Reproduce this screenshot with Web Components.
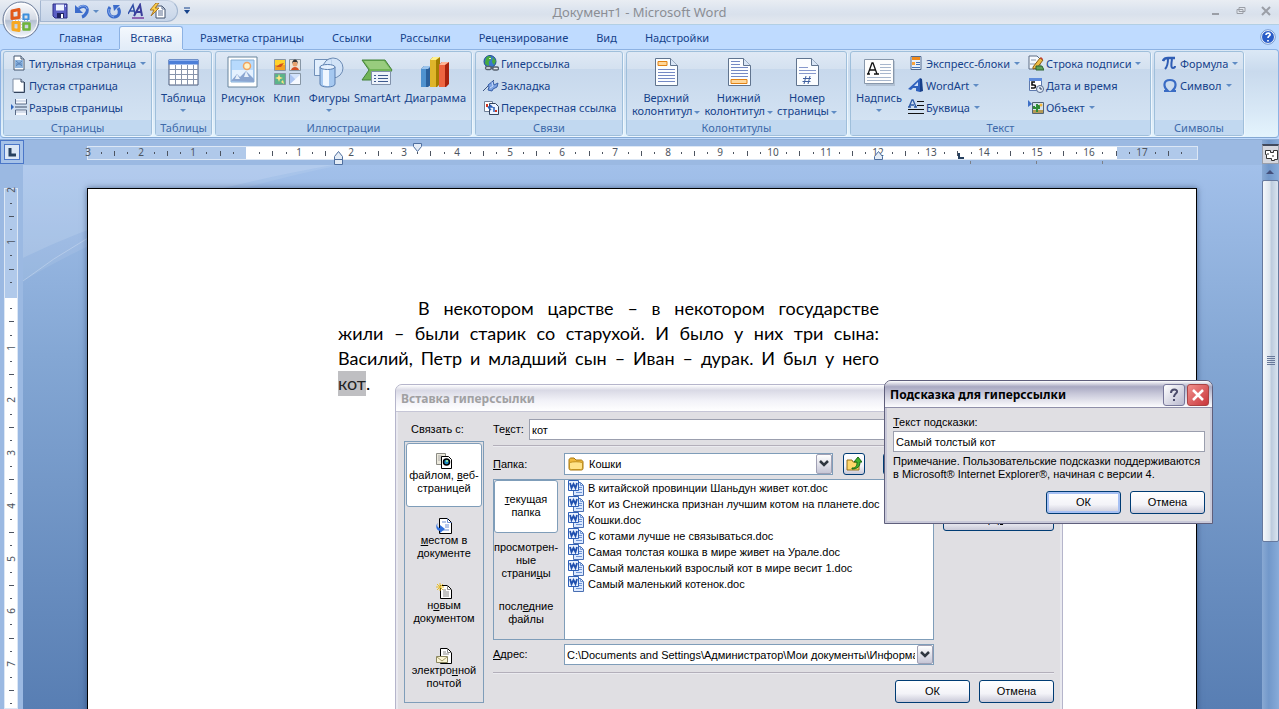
<!DOCTYPE html>
<html lang="ru">
<head>
<meta charset="utf-8">
<title>Документ1 - Microsoft Word</title>
<style>
  html, body {
    height: 100%;
    margin: 0;
    overflow: hidden;
  }
  body {
    font: 11px/13px "Noto Sans", "Open Sans", sans-serif;
    color: #15428b;
  }
</style>
</head>
<body>
<word-app></word-app>

<script>
// every small icon uses a 16x16 box, every large one 32x32
const ICONS = {
  save: [16, `<path d="M1 1h14v14H3l-2-2z" fill="#5a5fc4" stroke="#2c2f86"/><path d="M4 1.500h8v6H4z" fill="#eef3ff"/><path d="M5 10h7v5H5z" fill="#1f2362"/><path d="M9 11h2v4H9z" fill="#fff"/><path d="M13 2h1v2h-1z" fill="#cdd3ff"/>`],
  undo: [16, `<path d="M4 6c5-5 11-2 9 3-1 2-2 4-5 5" fill="none" stroke="#3c6ccb" stroke-width="3"/><path d="M4 5c5-4 9-2 9 1" fill="none" stroke="#8fb3f2"/><path d="M1 2v8h8z" fill="#3c6ccb"/>`],
  redo: [16, `<path d="M4 4c-3 4-1 10 4 10s7-5 4-9" fill="none" stroke="#3c6ccb" stroke-width="3"/><path d="M3 6c-1 4 1 7 5 8" fill="none" stroke="#8fb3f2"/><path d="M7 2h7l-6 6z" fill="#3c6ccb"/>`],
  fontAA: [16, `<g fill="none" stroke="#2f4da5" stroke-width="1.500"><path d="M0 11 5 2l2 9M2 8h4"/></g><g fill="none" stroke="#3b3f9c" stroke-width="2"><path d="M6 13 12 2l2 11M8 9h5"/></g><path d="M4 15h12" stroke="#7a3fa0" stroke-width="1.500"/>`],
  quick: [16, `<path d="M6 3h6l3 3v9H6z" fill="#fff" stroke="#43536d"/><path d="M12 3v3h3M8 8h5M8 10h5M8 12h5" fill="none" stroke="#5c6f90"/><path d="M6 0 0 7h4l-3 6 8-8H5l4-5z" fill="#ffd24a" stroke="#a8782a"/>`],
  cover: [16, `<path d="M3 1h7l3 3v11H3z" fill="#fff" stroke="#44566f"/><path d="M10 1v3h3" fill="#d6e2f2" stroke="#44566f"/><path d="M4 5h8v8H4z" fill="#8fb6e0"/><path d="m5 6 6 5M11 6l-6 5M5 9h6" stroke="#5a83b8"/>`],
  blank: [16, `<path d="M2 2h8l3 3v10H2z" fill="#fdfeff" stroke="#7d8ca3"/><path d="M10 2v3h3" fill="#c7d5e8" stroke="#33435c"/><path d="M13.500 5v10.500H3" fill="none" stroke="#33435c"/>`],
  pagebreak: [16, `<path d="M0 5v6l3-3z" fill="#3167bd"/><path d="M4.500 0v5h11V0M4.500 16v-5h11v5" fill="#f6f9fe" stroke="#586a86"/><path d="M5 2h10M5 13h10" stroke="#b4c3da"/><path d="M4 8h12" stroke="#3c4c66"/>`],
  table: [32, `<path d="M2 4h29v25H2z" fill="#fff" stroke="#4d5d7c"/><path d="M1.500 3.500h30v5h-30z" fill="#4c7fd8"/><path d="M2 4h29v1H2z" fill="#8fb2ef"/><path d="M2 13.500h29M2 18.500h29M2 23.500h29M8.500 9v20M14.500 9v20M20.500 9v20M26.500 9v20" stroke="#8794ab"/>`],
  picture: [32, `<path d="M1 1h29v30H1z" fill="#fff" stroke="#69849c"/><path d="M4 4h23v22H4z" fill="#b7dafd" stroke="#87afd6"/><path d="M5 14h21v11H5z" fill="#e4f1ff"/><circle cx="20" cy="10" r="3.500" fill="#fff2c8" stroke="#f0a460" stroke-width="1.500"/><path d="m4 25 6-7 3 3 6-6 8 8v3z" fill="#8aa5d0"/><path d="m10 18 3 5h-5zM19 15l3 6h-5z" fill="#e6effa"/>`],
  clip: [32, `<g stroke="#8796a5"><path d="M3.500 3.500h11v11h-11z" fill="#f3a222"/><path d="M18.500 3.500h11v11h-11z" fill="#ece4d9"/><path d="M3.500 17.500h11v11h-11z" fill="#5cb38b"/><path d="M18.500 17.500h11v11h-11z" fill="#d2e2fa"/></g><path d="M4 4h10v5H4z" fill="#ffd32c"/><path d="m5 11 4-3 4-1-3 4z" fill="#d1521e"/><circle cx="24" cy="8" r="2.500" fill="#e6a16d"/><path d="M21 8c0-6 6-6 6 0l-1-2h-4z" fill="#333"/><path d="M20 14c1-4 7-4 8 0z" fill="#d34f22"/><path d="m8 18 1 3 3 1-3 1-1 3-1-3-3-1 3-1zM12 24l1 4-3-2z" fill="#ffe680"/><path d="M19 18v10h3l3-4z" fill="#aac4f1"/><path d="m29 19-10 9h10z" fill="#f5f9ff"/>`],
  shapes: [32, `<path d="M1.500 3.500h17v16h-17z" fill="#e2effd" stroke="#7190b8"/><circle cx="20" cy="12" r="10" fill="#cfe2f9" fill-opacity=".8" stroke="#6c8bb4"/><path d="M7 11v17c0 4 15 4 15 0V11" fill="#a5c8f0" stroke="#5b7fb0"/><path d="M10 13v16c2 1 4 1 6 1V13z" fill="#eef6ff"/><ellipse cx="14.500" cy="11" rx="7.500" ry="2.500" fill="#e5f1ff" stroke="#5b7fb0"/>`],
  smartart: [32, `<path d="M1 4h23l7 10-7 10H1l7-10z" fill="#71b457" stroke="#44823a"/><path d="M3 5h20l6 8H9z" fill="#98cc7e"/><path d="M10.500 15.500h19v13h-19z" fill="#edf2fa" stroke="#8091aa"/><path d="M13 19.500h2M13 22.500h2M13 25.500h2M17 19.500h10M17 22.500h10M17 25.500h10" stroke="#3e5a8e"/>`],
  chart: [32, `<path d="m2 13 3-3h7v19l-3 2H2z" fill="#2b609c"/><path d="m2 13 3-3h7l-3 3z" fill="#9bc4ec"/><path d="M2 13h5v18H2z" fill="#4f92cf"/><path d="m11 4 3-3h7v27l-3 3h-7z" fill="#a37d00"/><path d="M11 4h6v27h-6z" fill="#dfb52a"/><path d="m11 4 3-3h7l-4 3z" fill="#fff08b"/><path d="m20 9 3-3h7v22l-3 3h-7z" fill="#a8230d"/><path d="M20 9h6v22h-6z" fill="#ee6540"/><path d="m20 9 3-3h7l-4 3z" fill="#ffb596"/>`],
  hyperlink: [16, `<circle cx="7" cy="6.500" r="6" fill="#3a78cd" stroke="#1d4a8b"/><path d="M3 3c3-4 6-1 5 1s-3 2-2 5-3 2-4-1zM10 2l3 4-2 4-2-3z" fill="#48ab3e"/><path d="M6 3h2v1H6z" fill="#d8f4c8"/><g fill="#e9edf3" stroke="#55606f" stroke-width="1.300"><rect x="2.500" y="11.500" width="6" height="3" rx="1.500"/><rect x="9.500" y="12" width="6" height="3" rx="1.500"/></g><path d="M7 13h4" stroke="#55606f"/>`],
  bookmark: [16, `<path d="m0 14 11-11" stroke="#3c5480"/><path d="m5 8 5-4 1 4 4-2-1 4-4 2-1 2-4-1 1-3z" fill="#7da3e2" stroke="#385fa8"/><path d="m9 5 1 4-3 2" fill="none" stroke="#c7dafa"/>`],
  crossref: [16, `<path d="M1.500 2.500h8v10h-8z" fill="#fff" stroke="#6f7f97"/><path d="M6.500 4.500h6l3 3v8h-9z" fill="#eef4ff" stroke="#33435c"/><path d="M3 5h2v3H3z" fill="#d2341c"/><path d="M5 8h4l-2-2M5 8l3 3M11 8v5" fill="none" stroke="#2b60b8" stroke-width="1.500"/><path d="M12 11h2v2h-2z" fill="#d2341c"/>`],
  header: [32, `<path d="M5.500 2.500h15l7 7v20h-22z" fill="#fbfdff" stroke="#60748f"/><path d="M20.500 2.500v7h7" fill="#d8e5f5" stroke="#60748f"/><path d="M8 5.500h9v4H8z" fill="#ffd79a" stroke="#e08215"/><path d="M8 13.500h17M8 16.500h17M8 19.500h17M8 22.500h17M8 25.500h17" stroke="#7489c4"/>`],
  footer: [32, `<path d="M5.500 2.500h15l7 7v20h-22z" fill="#fbfdff" stroke="#60748f"/><path d="M20.500 2.500v7h7" fill="#d8e5f5" stroke="#60748f"/><path d="M8 5.500h9M8 8.500h9M8 11.500h17M8 14.500h17M8 17.500h17M8 20.500h17" stroke="#7489c4"/><path d="M8 23.500h16v4H8z" fill="#ffd79a" stroke="#e08215"/>`],
  pagenumber: [32, `<path d="M5.500 2.500h15l7 7v20h-22z" fill="#fbfdff" stroke="#60748f"/><path d="M20.500 2.500v7h7" fill="#d8e5f5" stroke="#60748f"/><path d="M8 11.500h9M8 14.500h17M8 17.500h17" stroke="#8698cc"/><path d="m15 20-2 8M19 20l-2 8M12 22.500h8M11.500 25.500h8" stroke="#40609f"/>`],
  textbox: [32, `<path d="M3 5h29v25H3z" fill="#8b9aac" opacity=".4"/><path d="M1.500 3.500h29v24h-29z" fill="#fdfdfd" stroke="#8797ab"/><path d="m5 18 4-11h1l4 11M6 14h6M4 18h3M11 18h5" fill="none" stroke="#111" stroke-width="1.300"/><path d="M17 8.500h11M17 11.500h11M17 14.500h11M17 17.500h11M4 21.500h24M4 24.500h24" stroke="#a7b6cc"/>`],
  quickparts: [16, `<path d="M3 1.500h10v13H3z" fill="#e7effb" stroke="#536a8f"/><path d="M4 2h8v3H4z" fill="#f08a1c"/><path d="M4 7h3v3H4z" fill="#f9a33e"/><path d="M8 7.500h4M8 9.500h4M4 12.500h8" stroke="#3f6fb5"/>`],
  wordart: [16, `<path d="M0 12 12 1v14l-4-1v-3H5l-2 2z" fill="#2f61bd"/><path d="m6 9 4-4v4z" fill="#cfe0fa"/><path d="m12 1 2 1 1 12-3 1z" fill="#173f8a"/>`],
  dropcap: [16, `<path d="m1 8 3-7h1l3 7M2 6h4M0 8h3M6 8h3" fill="none" stroke="#2d5aa5" stroke-width="1.300"/><path d="M9 2.500h7M9 6.500h7M0 10.500h16M0 14.500h16" stroke="#111"/>`],
  signature: [16, `<path d="M1 1h8l3 3v10H1z" fill="#f7faff" stroke="#5d6c84"/><path d="M2 9h8M3 5h5" stroke="#8b98ad"/><path d="m5 12 7-9 3 2-6 8-4 1z" fill="#eebb44" stroke="#8b5f17"/><path d="m12 3 1-1 2 2-1 1z" fill="#c83d2c"/><path d="M8 11h6l2 4H8z" fill="#5da15a" stroke="#2e6330"/>`],
  datetime: [16, `<path d="M1.500 1.500h12v12h-12z" fill="#fff" stroke="#5d79ae"/><path d="M1 1h13v3H1z" fill="#5e8bdc"/><path d="M7 5H4v3h2c2 0 2 3 0 3H3" fill="none" stroke="#111" stroke-width="1.600"/><circle cx="12" cy="12" r="3.500" fill="#e5edf8" stroke="#53688d"/><path d="M12 10v2h2" fill="none" stroke="#2b3c5c"/>`],
  object: [16, `<path d="M0 1v7l4-3z" fill="#3d6fc6"/><path d="M4.500 3.500h11v11h-11z" fill="#d5e2ec" stroke="#526476"/><path d="M5 11h10v3H5z" fill="#b59a56"/><path d="M9 5v8M6 7v2h5V6" fill="none" stroke="#2f8c37" stroke-width="2"/><circle cx="13" cy="6" r="1.500" fill="#f5b73a"/>`],
  formula: [16, `<path d="M1 6c1-3 3-3 5-3h7" fill="none" stroke="#2f5db4" stroke-width="2.500"/><path d="M6 4c0 5-1 8-3 10M10 4c-1 6-1 9 1 9 1 0 2 0 2-2" fill="none" stroke="#2f5db4" stroke-width="2"/>`],
  symbol: [16, `<path d="M2 14h4c-5-4-5-11 2-11s7 7 2 11h4" fill="none" stroke="#3a6cc4" stroke-width="2.200"/>`],
  help: [16, `<circle cx="8" cy="8" r="6.500" fill="#2a5cc8" stroke="#fff"/><circle cx="8" cy="8" r="7.300" fill="none" stroke="#5c80bb" stroke-width=".7"/><path d="M6 6c0-3 5-2 4 0-.5 1-2 1-2 3M8 11v1.500" fill="none" stroke="#fff" stroke-width="1.700"/>`],
  folder: [16, `<path d="M1 4c0-1 1-2 2-2h3l2 2h5c1 0 2 1 2 2v6c0 2-1 2-2 2H3c-1 0-2 0-2-2z" fill="#f0b93c" stroke="#a8760e"/><path d="M1.500 6.500c4-1 9-1 13 0V12c0 1-1 1.500-2 1.500h-9c-1 0-2-.5-2-1.500z" fill="#ffe38a" stroke="#c2911f"/>`],
  up: [16, `<path d="M1 4h5l1 2h6v8H1z" fill="#ffd76a" stroke="#94701c"/><path d="M6 12c4 0 5-2 5-6H8l4-5 4 5h-2c0 5-3 7-8 7z" fill="#41b02d" stroke="#176a12"/>`],
  doc: [16, `<path d="M5.500 2.500h7l3 3v10h-10z" fill="#dce9ff" stroke="#4a6fb2"/><path d="M12.500 2.500v3h3M11 7.500h3M11 9.500h3M8 12.500h6" fill="none" stroke="#6f94d4"/><path d="M.5.500h10v10H.5z" fill="#e8f0fd" stroke="#2f60b8"/><path d="m2 3 1.500 5L5.500 4l2 4L9 3" fill="none" stroke="#1f4fae" stroke-width="1.800"/>`],
  linkfile: [16, `<path d="M.5.5h9v11h-9z" fill="#ece9dc" stroke="#8b8b84"/><path d="M2 3h4M2 5h4M2 7h4" stroke="#aaa"/><path d="M5.500 3.500h7l3 3v9h-10z" fill="#fff" stroke="#000"/><circle cx="10.500" cy="9" r="3" fill="#1b8ac0" stroke="#000" stroke-width="1.500"/><path d="M10 7h2v2h-2z" fill="#8fe0a0"/>`],
  linkplace: [16, `<path d="M3.500.5h8l4 4v11h-12z" fill="#fff" stroke="#000"/><path d="M11.500.5v4h4M6 4h4M9 7h4M9 9h4M7 12h6" fill="none" stroke="#6c8fd5"/><path d="M2 5c-2 3 0 5 2 5V7l5 4-5 4v-2C0 13-1 7 2 5z" fill="#2f6fdc"/>`],
  linknew: [16, `<path d="M4.500 2.500h7l4 4v9h-11z" fill="#fff" stroke="#000"/><path d="M11.500 2.500v4h4M7 7h3M7 9h6M7 11h6M7 13h6" fill="none" stroke="#888"/><path d="M4 0v8M0 4h8M1 1l6 6M7 1 1 7" stroke="#e9bd26"/>`],
  linkmail: [16, `<path d="M4.500.5h7l4 4v11h-11z" fill="#fff" stroke="#000"/><path d="M11.500.5v4h4M7 4h3M7 6h6" fill="none" stroke="#888"/><path d="M.5 8.500h11v6H.5z" fill="#fbf5d6" stroke="#8b865f"/><path d="m1 9 5 4 5-4" fill="none" stroke="#a59e6c"/>`],
  office: [44, `<defs><linearGradient id="ob" x2="0" y2="1"><stop stop-color="#fdfdfe"/><stop offset=".48" stop-color="#d3d9e4"/><stop offset=".52" stop-color="#b4bfd1"/><stop offset="1" stop-color="#f8fbff"/></linearGradient></defs><circle cx="22" cy="22" r="18" fill="url(#ob)" stroke="#6d7d9a"/><circle cx="22" cy="22" r="16.500" fill="none" stroke="#fff"/><g fill="none" stroke-linejoin="round"><path d="m13 13 7-1.500v8l-7 1z" stroke="#e2591a" stroke-width="3"/><path d="M24.500 16.500h5v5h-5z" stroke="#3d8fdc" stroke-width="2"/><path d="M14 24.500h6v8l-6-1z" stroke="#f7a821" stroke-width="3"/><path d="M24.500 25.500h6v6h-6z" stroke="#6fb43a" stroke-width="2.500"/></g><path d="M22.500 15v17M14 22.500h17" stroke="#fff" stroke-dasharray="2 1"/>`],
  browse: [16, `<path d="M2.500 3.500h5v2h3v-2h4v9h-3v1h-3v-2h-5v-4h-1z" fill="#fff" stroke="#333"/><path d="M4 7h2M9 9h2" stroke="#333"/>`],
};

class WordElement extends HTMLElement {
  constructor() {
    super();
    this.attachShadow({ mode: 'open' });
  }

  connectedCallback() {
    this.render();
  }

  render() {
    const template = document.createElement('template');
    template.innerHTML = this.getStyles() + this.getTemplate();
    this.shadowRoot.replaceChildren(template.content.cloneNode(true));
  }

  attr(name, fallback = '') {
    return this.getAttribute(name) ?? fallback;
  }
}

class OfficeIcon extends WordElement {
  getTemplate() {
    const [size, body] = ICONS[this.attr('name')];
    return `<svg width="${size}" height="${size}" viewBox="0 0 ${size} ${size}" aria-hidden="true">${body}</svg>`;
  }

  getStyles() {
    return `<style>:host { display: block; flex: none; } svg { display: block; }</style>`;
  }
}

class TitleBar extends WordElement {
  getTemplate() {
    return /* html */ `
      <button class="orb" aria-label="Office"><office-icon name="office"></office-icon></button>
      <div class="quick">
        <button aria-label="Сохранить"><office-icon name="save"></office-icon></button>
        <button aria-label="Отменить"><office-icon name="undo"></office-icon><i></i></button>
        <button aria-label="Повторить"><office-icon name="redo"></office-icon></button>
        <button aria-label="Шрифт"><office-icon name="fontAA"></office-icon></button>
        <button aria-label="Быстрая печать"><office-icon name="quick"></office-icon></button>
      </div>
      <button class="more" aria-label="Настройка панели"><svg width="8" height="8"><path d="M1 1h6" stroke="#15428b"/><path d="M1 3h6L4 7z" fill="#15428b"/></svg></button>
      <h1>Документ1 - Microsoft Word</h1>
      <div class="controls">
        <button aria-label="Свернуть"><svg width="10" height="10"><path d="M1 8h7" stroke="#9a9ea6" stroke-width="2"/></svg></button>
        <button aria-label="Восстановить"><svg width="10" height="10"><path d="M3 1.500h6v4H3zM1 3.500h6v4H1z" fill="#e3e8ef" stroke="#9a9ea6"/></svg></button>
        <button aria-label="Закрыть"><svg width="10" height="10"><path d="m1 1 8 8M9 1 1 9" stroke="#9a9ea6" stroke-width="2"/></svg></button>
      </div>
    `;
  }

  getStyles() {
    return `
      <style>
        :host {
          position: relative;
          display: flex;
          align-items: flex-start;
          height: 24px;
          background: linear-gradient(#e9edf3, #dbe3ee 45%, #d9e1ec 60%, #e4e9f0);
          border-bottom: 1px solid #b2cfe4;
        }
        button {
          display: flex;
          align-items: center;
          padding: 0;
          border: 0;
          background: none;
        }
        .orb {
          position: absolute;
          left: -1px;
          top: -2px;
          z-index: 2;
        }
        .quick {
          display: flex;
          align-items: center;
          gap: 6px;
          height: 20px;
          margin-left: 40px;
          padding: 0 11px;
          background: linear-gradient(#dbe4f1, #c7d5e8);
          border: 1px solid #a3b6d0;
          border-top-color: #c4d0e1;
          border-radius: 0 11px 11px 0;
        }
        i {
          width: 0;
          border: 3px solid transparent;
          border-top-color: #5f8bc4;
          border-bottom: 0;
          margin: 0 1px 0 3px;
        }
        .more { height: 22px; margin-left: 5px; }
        h1 {
          position: absolute;
          inset: 0;
          margin: 0;
          font: 13px/24px "Noto Sans", sans-serif;
          color: #8b8e94;
          text-align: center;
        }
        .controls {
          display: flex;
          gap: 15px;
          margin: 6px 8px 0 auto;
          z-index: 1;
        }
      </style>
    `;
  }
}

class RibbonTabs extends WordElement {
  getTemplate() {
    const tabs = ['Главная', 'Вставка', 'Разметка страницы', 'Ссылки', 'Рассылки', 'Рецензирование', 'Вид', 'Надстройки'];
    return /* html */ `
      <nav>${tabs.map((tab) => `<a href="#" ${tab === 'Вставка' ? 'class="active"' : ''}>${tab}</a>`).join('')}</nav>
      <button aria-label="Справка"><office-icon name="help"></office-icon></button>
    `;
  }

  getStyles() {
    return `
      <style>
        :host {
          display: flex;
          justify-content: space-between;
          height: 24px;
          padding: 0 3px 0 48px;
          background: #bfdbff;
        }
        nav { display: flex; align-items: flex-end; gap: 6px; }
        a {
          padding: 0 10px;
          line-height: 22px;
          color: #15428b;
          text-decoration: none;
          border: 1px solid transparent;
          border-bottom: 0;
          position: relative;
        }
        .active {
          z-index: 1;
          background: linear-gradient(#f4f8fd, #e2ecf8);
          border-color: #8db2e3;
          border-radius: 3px 3px 0 0;
          box-shadow: 0 1px 0 #e2ecf8;
        }
        button { padding: 0; border: 0; background: none; }
      </style>
    `;
  }
}

class RibbonGroup extends WordElement {
  getTemplate() {
    return `<div class="body"><slot></slot></div><footer>${this.attr('label')}</footer>`;
  }

  getStyles() {
    return `
      <style>
        :host {
          display: flex;
          flex-direction: column;
          min-width: 0;
          box-sizing: border-box;
          border: 1px solid #9fbfdb;
          border-radius: 3px;
          background: linear-gradient(#dfe9f5, #d4e1f0 20%, #c7d8ec 21%, #d6e5f4);
          box-shadow: 1px 1px 0 #eef6fd;
        }
        .body {
          display: flex;
          flex: 1;
          align-items: flex-start;
          padding: 0 3px;
        }
        footer {
          height: 15px;
          background: #c1d8f0;
          color: #3e6aaa;
          text-align: center;
          line-height: 15px;
        }
      </style>
    `;
  }
}

class RibbonButton extends WordElement {
  getTemplate() {
    const menu = this.hasAttribute('menu') ? '<i></i>' : '';
    return `<button><office-icon name="${this.attr('icon')}"></office-icon><span><slot></slot>${this.hasAttribute('wrap') ? menu : ''}</span>${this.hasAttribute('wrap') ? '' : menu}</button>`;
  }

  getStyles() {
    return `
      <style>
        :host { display: block; }
        button {
          display: flex;
          align-items: center;
          gap: 2px;
          height: 22px;
          padding: 0 4px;
          border: 0;
          background: none;
          font: inherit;
          color: inherit;
          white-space: nowrap;
        }
        i {
          display: inline-block;
          border: 3px solid transparent;
          border-top-color: #5f8bc4;
          border-bottom: 0;
          margin-left: 2px;
          vertical-align: middle;
        }
        :host([large]) button {
          flex-direction: column;
          box-sizing: border-box;
          min-width: 40px;
          height: auto;
          gap: 3px;
          padding: 4px 2px 0;
        }
        :host([large]) span { text-align: center; }
        :host([large]) button > i { margin: 2px 0 0; }
      </style>
    `;
  }
}

class WordRibbon extends WordElement {
  getTemplate() {
    return /* html */ `
      <ribbon-group label="Страницы">
        <div>
          <ribbon-button icon="cover" menu>Титульная страница</ribbon-button>
          <ribbon-button icon="blank">Пустая страница</ribbon-button>
          <ribbon-button icon="pagebreak">Разрыв страницы</ribbon-button>
        </div>
      </ribbon-group>
      <ribbon-group label="Таблицы">
        <ribbon-button large menu icon="table">Таблица</ribbon-button>
      </ribbon-group>
      <ribbon-group label="Иллюстрации">
        <ribbon-button large icon="picture">Рисунок</ribbon-button>
        <ribbon-button large icon="clip">Клип</ribbon-button>
        <ribbon-button large menu icon="shapes">Фигуры</ribbon-button>
        <ribbon-button large icon="smartart">SmartArt</ribbon-button>
        <ribbon-button large icon="chart">Диаграмма</ribbon-button>
      </ribbon-group>
      <ribbon-group label="Связи">
        <div>
          <ribbon-button icon="hyperlink">Гиперссылка</ribbon-button>
          <ribbon-button icon="bookmark">Закладка</ribbon-button>
          <ribbon-button icon="crossref">Перекрестная ссылка</ribbon-button>
        </div>
      </ribbon-group>
      <ribbon-group label="Колонтитулы">
        <ribbon-button large wrap menu icon="header">Верхний<br>колонтитул</ribbon-button>
        <ribbon-button large wrap menu icon="footer">Нижний<br>колонтитул</ribbon-button>
        <ribbon-button large wrap menu icon="pagenumber">Номер<br>страницы</ribbon-button>
      </ribbon-group>
      <ribbon-group label="Текст">
        <ribbon-button large menu icon="textbox">Надпись</ribbon-button>
        <div>
          <ribbon-button icon="quickparts" menu>Экспресс-блоки</ribbon-button>
          <ribbon-button icon="wordart" menu>WordArt</ribbon-button>
          <ribbon-button icon="dropcap" menu>Буквица</ribbon-button>
        </div>
        <div>
          <ribbon-button icon="signature" menu>Строка подписи</ribbon-button>
          <ribbon-button icon="datetime">Дата и время</ribbon-button>
          <ribbon-button icon="object" menu>Объект</ribbon-button>
        </div>
      </ribbon-group>
      <ribbon-group label="Символы">
        <div>
          <ribbon-button icon="formula" menu>Формула</ribbon-button>
          <ribbon-button icon="symbol" menu>Символ</ribbon-button>
        </div>
      </ribbon-group>
    `;
  }

  getStyles() {
    return `
      <style>
        :host {
          display: grid;
          grid-template-columns: 149fr 57fr 257fr 148fr 221fr 301fr 90fr 29fr;
          gap: 3px;
          height: 85px;
          padding: 1px 2px;
          background: linear-gradient(#dbe8f6, #c9daed 25%, #d8e8f6 70%, #e4f4fd);
          border: 1px solid #8db2e3;
          border-bottom-color: #84a8d3;
          border-radius: 4px;
        }
      </style>
    `;
  }
}

// centimetre ruler: numbers at every unit, a bar at the half, dots at the quarters
class WordRuler extends WordElement {
  getTemplate() {
    const vertical = this.hasAttribute('vertical');
    const zero = Number(this.attr('zero'));
    const from = Number(this.attr('from'));
    const to = Number(this.attr('to'));
    const unit = 52.7;
    let marks = '';
    for (let q = from * 4; q <= to * 4; q++) {
      if (q === 0) continue;
      const p = Math.round(zero + q * unit / 4);
      if (q % 4 === 0) {
        marks += vertical
          ? `<text transform="translate(10 ${p}) rotate(-90)">${Math.abs(q / 4)}</text>`
          : `<text x="${p}" y="9">${Math.abs(q / 4)}</text>`;
      } else {
        const half = q % 2 === 0 ? 5 : 2;
        const start = half === 5 ? 4 : 5;
        marks += vertical
          ? `<rect x="${start}" y="${p}" width="${half}" height="1"/>`
          : `<rect x="${p}" y="${start}" width="1" height="${half}"/>`;
      }
    }
    return `<div class="active"></div><svg>${marks}</svg><slot></slot>`;
  }

  getStyles() {
    const start = this.attr('start', this.attr('zero'));
    const box = this.hasAttribute('vertical')
      ? `left: 0; right: 0; top: ${start}px; bottom: 0;`
      : `top: 0; bottom: 0; left: ${start}px; right: 80px;`;
    return `
      <style>
        :host {
          position: relative;
          display: block;
          box-sizing: border-box;
          border: 1px solid #dce7f5;
          background: #b0c9ea;
        }
        .active {
          position: absolute;
          background: #fff;
          ${box}
        }
        svg {
          position: absolute;
          width: 100%;
          height: 100%;
          overflow: visible;
          fill: #4d5460;
        }
        text {
          font: 10px "Noto Sans", sans-serif;
          text-anchor: middle;
        }
      </style>
    `;
  }
}

class ScrollBar extends WordElement {
  getTemplate() {
    return /* html */ `
      <button aria-label="Линейка"><office-icon name="browse"></office-icon></button>
      <button class="up" aria-label="Вверх"></button>
      <div class="thumb"><span></span></div>
    `;
  }

  getStyles() {
    return `
      <style>
        :host {
          display: flex;
          flex-direction: column;
          align-items: stretch;
          padding-top: 4px;
          background: linear-gradient(90deg, #89a9d3, #7298ca 40%, #87abd9);
        }
        button {
          height: 20px;
          padding: 0;
          border: 1px solid #9a9fab;
          border-top: 2px solid #424a5c;
          background: #d5d7de;
        }
        .up {
          position: relative;
          height: 16px;
          border: 0;
          background: none;
        }
        .up::after {
          content: "";
          position: absolute;
          left: 4px;
          top: 6px;
          border: 4px solid transparent;
          border-bottom-color: #44507c;
          border-top: 0;
        }
        .thumb {
          display: flex;
          align-items: center;
          justify-content: center;
          height: 64%;
          box-sizing: border-box;
          border: 1px solid #66799e;
          border-radius: 2px;
          background: linear-gradient(90deg, #f5f8fb, #dde5ee 45%, #bccbdd 55%, #d9e4f0);
        }
        span {
          width: 8px;
          height: 9px;
          background: repeating-linear-gradient(#68799a 0 1px, transparent 1px 2px);
        }
      </style>
    `;
  }
}

class WordPage extends WordElement {
  getTemplate() {
    return `<article><slot></slot></article>`;
  }

  getStyles() {
    return `
      <style>
        :host {
          display: block;
          box-sizing: border-box;
          border: 1px solid #000;
          background: #fff;
          box-shadow: 0 0 6px rgba(30, 50, 90, .6);
        }
        article {
          max-width: 541px;
          margin: 107px 0 0 250px;
          font: 18px/25px Lato, "Open Sans", sans-serif;
          color: #000;
        }
      </style>
    `;
  }
}

class XpWindow extends WordElement {
  getTemplate() {
    const buttons = this.hasAttribute('active')
      ? `<button class="help" aria-label="Справка"><svg width="20" height="20"><path d="M7 8c0-5 7-4 6-1-1 2-3 2-3 5M10 14v2" fill="none" stroke="#4b4b6b" stroke-width="2"/></svg></button>
         <button class="close" aria-label="Закрыть"><svg width="20" height="20"><path d="m5 5 10 10M15 5 5 15" stroke="#fff" stroke-width="2.500"/></svg></button>`
      : '';
    return `<header><h2>${this.attr('caption')}</h2>${buttons}</header><section><slot></slot></section>`;
  }

  getStyles() {
    return `
      <style>
        :host {
          display: flex;
          flex-direction: column;
          box-sizing: border-box;
          border: 1px solid #b5b5cb;
          border-radius: 7px 7px 0 0;
          background: #e0dfe3;
          color: #000;
        }
        header {
          display: flex;
          align-items: center;
          gap: 2px;
          box-sizing: border-box;
          height: 27px;
          padding: 2px 3px 0 5px;
          border-bottom: 1px solid #c6c6d6;
          border-radius: 6px 6px 0 0;
          background: linear-gradient(#fff, #d9d9e5 20%, #f2f2f8 60%, #fff);
        }
        h2 {
          flex: 1;
          margin: 0;
          font: bold 12px/16px "Noto Sans", sans-serif;
          color: #a0a0a2;
        }
        section {
          display: flex;
          flex: 1;
          flex-direction: column;
          border: 2px solid #e9e9ef;
          border-top: 0;
        }
        :host([active]) { border-color: #5f5f7c; }
        :host([active]) section { border-color: #c9c9d9; }
        :host([active]) header {
          background: linear-gradient(#fff, #a9a9c2 22%, #c9c9da 50%, #fcfcfe);
          border-bottom-color: #8f8fa9;
        }
        :host([active]) h2 { color: #000; }
        button {
          width: 22px;
          height: 22px;
          padding: 0;
          border: 1px solid #77779a;
          border-radius: 3px;
          background: linear-gradient(135deg, #fff, #b9b9cf);
        }
        .close { background: linear-gradient(135deg, #f0908c, #c9353b); border-color: #a44; }
      </style>
    `;
  }
}

class XpButton extends WordElement {
  getTemplate() {
    return `<button><slot></slot></button>`;
  }

  getStyles() {
    return `
      <style>
        :host { display: block; width: 75px; height: 23px; }
        button {
          display: flex;
          align-items: center;
          justify-content: center;
          width: 100%;
          height: 100%;
          padding: 0;
          border: 1px solid #003c74;
          border-radius: 3px;
          background: linear-gradient(#fff, #f3f3f8 60%, #c9c9d8);
          font: inherit;
          color: #000;
        }
        :host([default]) button { box-shadow: inset 0 0 0 2px #a6c0f4; }
      </style>
    `;
  }
}

const FIELD = `
  :host {
    display: block;
    font: 11px/13px "Liberation Sans", Arial, sans-serif;
  }
  input, select {
    appearance: none;
    box-sizing: border-box;
    width: 100%;
    height: 21px;
    margin: 0;
    padding: 0 2px;
    border: 1px solid #7f9db9;
    border-radius: 0;
    background: #fff;
    font: inherit;
    color: #000;
    outline: 0;
  }
  .combo { position: relative; display: flex; }
  .combo .drop {
    position: absolute;
    right: 1px;
    top: 1px;
    width: 16px;
    height: 19px;
    box-sizing: border-box;
    padding: 0;
    border: 1px solid #a0a0b4;
    border-radius: 2px;
    background: linear-gradient(#fff, #c6c6d6);
  }
  .drop svg { display: block; }
`;
const CHEVRON = `<svg width="14" height="17"><path d="m3 6 4 4 4-4" fill="none" stroke="#2f3640" stroke-width="2.500"/></svg>`;

class HyperlinkDialog extends WordElement {
  getTemplate() {
    const files = [
      'В китайской провинции Шаньдун живет кот.doc',
      'Кот из Снежинска признан лучшим котом на планете.doc',
      'Кошки.doc',
      'С котами лучше не связываться.doc',
      'Самая толстая кошка в мире живет на Урале.doc',
      'Самый маленький взрослый кот в мире весит 1.doc',
      'Самый маленький котенок.doc',
    ];
    return /* html */ `
      <xp-window caption="Вставка гиперссылки">
        <div class="content">
          <div class="side">
            <p>Связать с:</p>
            <div class="places">
              <button class="active"><office-icon name="linkfile"></office-icon><span>файлом, <u>в</u>еб-<br>страницей</span></button>
              <button><office-icon name="linkplace"></office-icon><span><u>м</u>естом в<br>документе</span></button>
              <button><office-icon name="linknew"></office-icon><span>н<u>о</u>вым<br>документом</span></button>
              <button><office-icon name="linkmail"></office-icon><span>электро<u>н</u>ной<br>почтой</span></button>
            </div>
          </div>
          <div class="main">
            <div class="row text"><label for="text">Те<u>к</u>ст:</label><input id="text" value="кот"></div>
            <hr>
            <div class="row folder">
              <label for="folder"><u>П</u>апка:</label>
              <div class="combo">
                <select id="folder"><option>Кошки</option></select>
                <office-icon name="folder"></office-icon>
                <span class="drop">${CHEVRON}</span>
              </div>
              <xp-button class="square"><office-icon name="up"></office-icon></xp-button>
              <xp-button class="square"></xp-button>
            </div>
            <div class="row middle">
              <div class="views">
                <button class="active"><span><u>т</u>екущая<br>папка</span></button>
                <button><span>просмотрен-<br>ные<br>страни<u>ц</u>ы</span></button>
                <button><span>посл<u>е</u>дние<br>файлы</span></button>
              </div>
              <ul>${files.map((file) => `<li><office-icon name="doc"></office-icon>${file}</li>`).join('')}</ul>
              <xp-button class="frame">Выбор&nbsp;<u>р</u>амки...</xp-button>
            </div>
            <div class="row address">
              <label for="address"><u>А</u>дрес:</label>
              <div class="combo">
                <input id="address" value="C:\\Documents and Settings\\Администратор\\Мои документы\\Информация">
                <button class="drop" aria-label="Открыть список">${CHEVRON}</button>
              </div>
            </div>
            <hr>
            <div class="actions"><xp-button>ОК</xp-button><xp-button>Отмена</xp-button></div>
          </div>
        </div>
      </xp-window>
    `;
  }

  getStyles() {
    return `
      <style>
        ${FIELD}
        xp-window { height: 100%; }
        .content { display: flex; gap: 9px; padding: 7px 6px 0; }
        .side { width: 80px; }
        p { margin: 4px 0 5px 7px; }
        .places, .views {
          display: flex;
          flex-direction: column;
          box-sizing: border-box;
          border: 1px solid #7f9db9;
        }
        .places { height: 262px; padding: 1px; gap: 1px; }
        .places button, .views button {
          display: flex;
          flex: none;
          flex-direction: column;
          align-items: center;
          padding: 9px 0 0;
          border: 1px solid transparent;
          background: none;
          font: inherit;
          color: #000;
          white-space: nowrap;
        }
        .places button { height: 64px; }
        .places .active, .views .active {
          border-color: #7f9db9;
          border-radius: 3px;
          background: #fff;
        }
        .main { flex: 1; min-width: 0; }
        .row { display: flex; align-items: center; }
        .text label { width: 36px; flex: none; }
        .text input { border-color: #9b9fae; }
        hr {
          height: 1px;
          margin: 5px 0 7px;
          border: 0;
          background: #b3afba;
          box-shadow: 0 1px 0 #ebebf0;
        }
        .folder label, .address label { width: 71px; flex: none; }
        .folder .combo { width: 269px; margin-right: 10px; }
        .folder select { padding-left: 24px; height: 22px; }
        .folder .drop { height: 20px; pointer-events: none; }
        .combo office-icon { position: absolute; left: 4px; top: 3px; }
        .square { width: 22px; height: 22px; margin-right: 18px; }
        .middle { align-items: stretch; height: 161px; margin: 4px 0; }
        .views { width: 71px; flex: none; border-right: 0; }
        .views button { width: 64px; padding: 12px 0 0; height: 53px; }
        .views button + button { height: 59px; padding-top: 7px; }
        ul {
          width: 370px;
          box-sizing: border-box;
          margin: 0;
          padding: 0 3px;
          border: 1px solid #7f9db9;
          background: #fff;
          list-style: none;
        }
        li { display: flex; align-items: center; gap: 4px; height: 16px; white-space: nowrap; }
        .frame { width: 111px; margin: 29px 0 0 9px; }
        .address .combo { width: 370px; }
        .address input { padding-right: 18px; }
        .address + hr { margin: 7px 0; }
        .actions { display: flex; justify-content: flex-end; gap: 9px; }
      </style>
    `;
  }
}

class TipDialog extends WordElement {
  getTemplate() {
    return /* html */ `
      <xp-window active caption="Подсказка для гиперссылки">
        <div class="content">
          <label for="tip"><u>Т</u>екст подсказки:</label>
          <input id="tip" value="Самый толстый кот">
          <p>Примечание. Пользовательские подсказки поддерживаются<br>в Microsoft® Internet Explorer®, начиная с версии 4.</p>
          <div class="actions"><xp-button default>ОК</xp-button><xp-button>Отмена</xp-button></div>
        </div>
      </xp-window>
    `;
  }

  getStyles() {
    return `
      <style>
        ${FIELD}
        xp-window { height: 100%; }
        .content { padding: 8px 5px 0 6px; }
        label { display: block; margin-bottom: 2px; }
        input { border-color: #9b9fae; }
        p { margin: 3px 0 10px; white-space: nowrap; }
        .actions { display: flex; justify-content: flex-end; gap: 9px; }
      </style>
    `;
  }
}

class WordApp extends WordElement {
  getTemplate() {
    return /* html */ `
      <title-bar></title-bar>
      <ribbon-tabs></ribbon-tabs>
      <word-ribbon></word-ribbon>
      <main>
        <div class="desk">
          <div class="top">
            <button class="tabstop" aria-label="Табуляция"><svg width="14" height="14"><path d="M5 3v7h6" fill="none" stroke="#26405f" stroke-width="3"/></svg></button>
            <word-ruler zero="158" from="-3" to="17.75">
              <svg class="marker" style="left: 246px; top: 4px" width="10" height="14"><path d="m.5 5.500 4-5 4 5v3h-8zM.5 8.500h8v5h-8z" fill="#e4ecf6" stroke="#4f6f9f"/></svg>
              <svg class="marker" style="left: 325px; top: -4px" width="10" height="10"><path d="M.5.500h8v3l-4 5-4-5z" fill="#e4ecf6" stroke="#4f6f9f"/></svg>
              <svg class="marker" style="left: 786px; top: 4px" width="10" height="9"><path d="m.5 5.500 4-5 4 5v3h-8z" fill="#e4ecf6" stroke="#4f6f9f"/></svg>
              <svg class="marker" style="left: 870px; top: 6px" width="7" height="7"><path d="M1 0v5h5" fill="none" stroke="#26405f" stroke-width="2"/></svg>
              <svg class="marker" style="left: 882px; top: 14px" width="134" height="3"><path d="M.5 0v3M66.500 0v3M132.500 0v3" stroke="#7c7f88"/></svg>
            </word-ruler>
          </div>
          <div class="left"><word-ruler vertical zero="106" start="109" from="-2" to="7.75"></word-ruler></div>
          <div class="stage">
            <svg class="swoosh" width="330" height="120" viewBox="0 0 330 120">
              <path d="M0 0h310Q120 34 0 93z" fill="#fff" opacity=".18"/>
              <path d="M0 93Q120 34 310 0h8Q130 38 0 116z" fill="#fff" opacity=".08"/>
              <path d="M0 116Q60 70 130 42" fill="none" stroke="#fff" opacity=".25"/>
            </svg>
            <word-page>
              <div class="line first">В некотором царстве – в некотором государстве</div>
              <div class="line">жили – были старик со старухой. И было у них три сына:</div>
              <div class="line">Василий, Петр и младший сын – Иван – дурак. И был у него</div>
              <div><mark>кот</mark>.</div>
            </word-page>
            <hyperlink-dialog></hyperlink-dialog>
            <tip-dialog></tip-dialog>
          </div>
        </div>
        <scroll-bar></scroll-bar>
      </main>
    `;
  }

  getStyles() {
    return `
      <style>
        :host {
          display: flex;
          flex-direction: column;
          height: 100vh;
          overflow: hidden;
          background: #bfdbff;
        }
        main {
          display: grid;
          grid-template-columns: 1fr 17px;
          flex: 1;
          min-height: 0;
          margin-top: 1px;
          border-top: 1px solid #8fadd4;
          background: #9bb9e2;
        }
        .desk {
          display: grid;
          grid-template: 25px 1fr / 23px 1fr;
          min-height: 0;
          min-width: 0;
        }
        .top {
          grid-column: 1 / 3;
          display: flex;
          align-items: flex-start;
          gap: 63px;
          padding-right: 64px;
          background: #9bb9e2;
        }
        .top word-ruler { flex: 1; height: 14px; margin-top: 6px; }
        .marker { position: absolute; }
        .tabstop {
          display: flex;
          align-items: center;
          justify-content: center;
          box-sizing: border-box;
          width: 24px;
          height: 24px;
          padding: 0;
          border: 1px solid #4b77c8;
          background: #a6c2e8;
        }
        .tabstop svg { border: 1px solid #4b77c8; background: #dbe7f6; }
        .left {
          display: grid;
          padding: 23px 5px 0 4px;
          background: #9bb9e2;
        }
        .stage {
          position: relative;
          min-height: 0;
          background: linear-gradient(#a2c0ea, #84a7d4 35%, #587eb3);
        }
        .swoosh { position: absolute; }
        word-page {
          position: relative;
          height: 100%;
          margin: 23px 65px 0 64px;
        }
        .line { text-align-last: justify; }
        .first { padding-left: 80px; }
        mark { display: inline-block; background: #bfbfc2; color: #222; }
        hyperlink-dialog {
          position: absolute;
          left: 372px;
          top: 219px;
          width: 668px;
          height: 370px;
        }
        tip-dialog {
          position: absolute;
          left: 861px;
          top: 215px;
          width: 329px;
          height: 144px;
        }
      </style>
    `;
  }
}

customElements.define('office-icon', OfficeIcon);
customElements.define('title-bar', TitleBar);
customElements.define('ribbon-tabs', RibbonTabs);
customElements.define('ribbon-group', RibbonGroup);
customElements.define('ribbon-button', RibbonButton);
customElements.define('word-ribbon', WordRibbon);
customElements.define('word-ruler', WordRuler);
customElements.define('scroll-bar', ScrollBar);
customElements.define('word-page', WordPage);
customElements.define('xp-window', XpWindow);
customElements.define('xp-button', XpButton);
customElements.define('hyperlink-dialog', HyperlinkDialog);
customElements.define('tip-dialog', TipDialog);
customElements.define('word-app', WordApp);
</script>
</body>
</html>
